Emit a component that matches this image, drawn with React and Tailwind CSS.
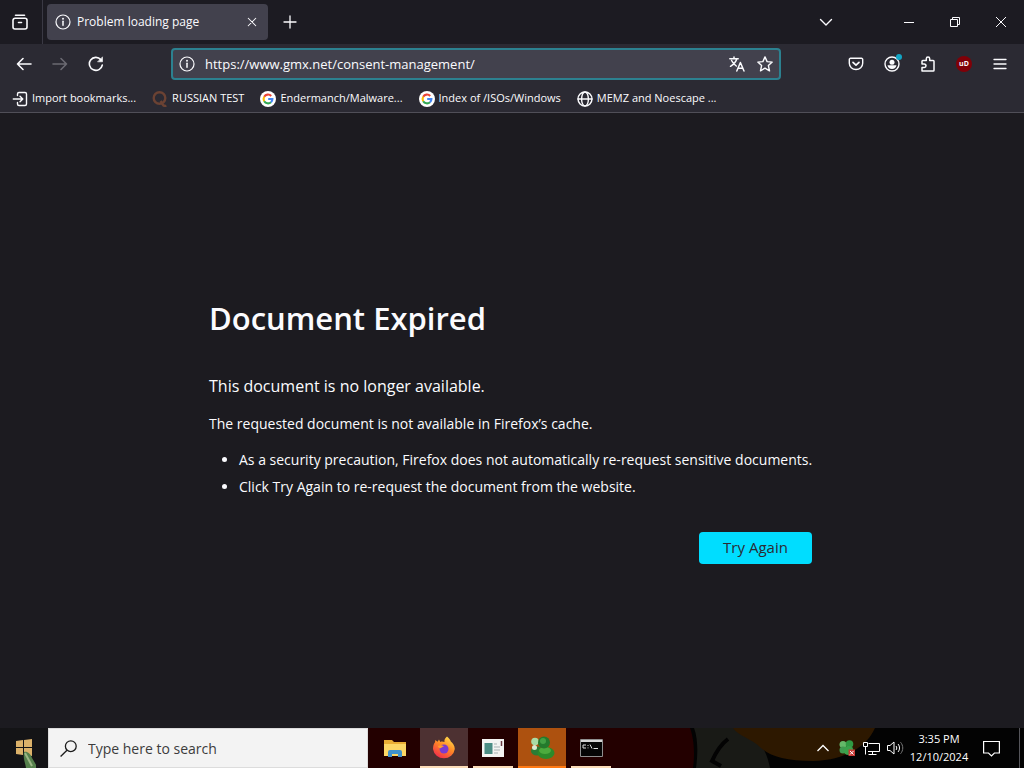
import { useState } from 'react';

const bookmarks = [
  { label: 'Import bookmarks...', icon: 'import' },
  { label: 'RUSSIAN TEST', icon: 'quora' },
  { label: 'Endermanch/Malware...', icon: 'google' },
  { label: 'Index of /ISOs/Windows', icon: 'google' },
  { label: 'MEMZ and Noescape ...', icon: 'globe' },
];

function Stroke({ size = 16, width = 1.4, children }) {
  return (
    <svg
      width={size}
      height={size}
      viewBox="0 0 16 16"
      fill="none"
      stroke="currentColor"
      strokeWidth={width}
      strokeLinecap="round"
      strokeLinejoin="round"
      aria-hidden="true"
    >
      {children}
    </svg>
  );
}

function InfoIcon() {
  return (
    <Stroke width={1.2}>
      <circle cx="8" cy="8" r="7" />
      <path d="M8 7.3v4" strokeWidth="1.5" />
      <circle cx="8" cy="4.7" r="0.4" fill="currentColor" />
    </Stroke>
  );
}

function GoogleIcon() {
  return (
    <svg width="16" height="16" viewBox="0 0 16 16" fill="none" aria-hidden="true">
      <circle cx="8" cy="8" r="8" fill="#fff" />
      <g strokeWidth="2.1">
        <path d="M4.2 5.8A4.4 4.4 0 0 1 11.2 4.9" stroke="#ea4335" />
        <path d="M4.2 10.2A4.4 4.4 0 0 1 4.2 5.8" stroke="#fbbc05" />
        <path d="M11 11.2A4.4 4.4 0 0 1 4.2 10.2" stroke="#34a853" />
        <path d="M8.2 8h4.2A4.4 4.4 0 0 1 11 11.2" stroke="#4285f4" />
      </g>
    </svg>
  );
}

function BookmarkIcon({ name }) {
  if (name === 'google') return <GoogleIcon />;
  if (name === 'quora') {
    return (
      <svg width="16" height="16" viewBox="0 0 16 16" fill="none" stroke="#6b4233" aria-hidden="true">
        <circle cx="7.5" cy="7" r="5.8" strokeWidth="2.4" />
        <path d="M8.6 10l2.2 3.6c.8 1.3 2 1.6 3.6 1.2" strokeWidth="2.4" />
      </svg>
    );
  }
  if (name === 'globe') {
    return (
      <Stroke>
        <circle cx="8" cy="8" r="7" />
        <ellipse cx="8" cy="8" rx="3.4" ry="7" />
        <path d="M1 8h14" />
      </Stroke>
    );
  }
  return (
    <Stroke>
      <path d="M5.5 4.5V3A1.5 1.5 0 0 1 7 1.5h6A1.5 1.5 0 0 1 14.5 3v10a1.5 1.5 0 0 1-1.5 1.5H7A1.5 1.5 0 0 1 5.5 13v-1.5" />
      <path d="M1.3 8h9.4M8 5.2L10.8 8 8 10.8" />
    </Stroke>
  );
}

function ToolButton({ label, className = '', children }) {
  return (
    <button type="button" aria-label={label} className={`flex h-8 w-9 items-center justify-center ${className}`}>
      {children}
    </button>
  );
}

function TabStrip() {
  return (
    <div className="flex h-11 items-center bg-[#1c1b22]">
      <div className="flex h-full w-[43px] items-center border-r border-[#3a3944]">
        <ToolButton label="Firefox View" className="ml-0.5">
          <Stroke width={1.6}>
            <path d="M3.5 1.2h9" />
            <path d="M1 6.3a2 2 0 0 1 2-2h10a2 2 0 0 1 2 2V13a2 2 0 0 1-2 2H3a2 2 0 0 1-2-2zM6.5 8.5h3" />
          </Stroke>
        </ToolButton>
      </div>
      <div className="ml-1 flex h-9 w-[221px] items-center rounded bg-[#42414d] px-2">
        <InfoIcon />
        <span className="ml-1.5 flex-1 truncate text-xs">Problem loading page</span>
        <button type="button" aria-label="Close tab" className="flex h-4 w-4 items-center justify-center">
          <Stroke size={12}>
            <path d="M3 3l10 10M13 3L3 13" />
          </Stroke>
        </button>
      </div>
      <ToolButton label="Open a new tab" className="ml-1">
        <Stroke width={1.3}>
          <path d="M8 2v12M2 8h12" />
        </Stroke>
      </ToolButton>
      <div className="flex-1" />
      <ToolButton label="List all tabs" className="mr-[42px]">
        <Stroke>
          <path d="M2.5 5.5L8 11l5.5-5.5" />
        </Stroke>
      </ToolButton>
      <button type="button" aria-label="Minimize" className="flex h-8 w-[46px] items-center justify-center">
        <svg width="10" height="10" stroke="currentColor" aria-hidden="true"><path d="M0 5.5h10" /></svg>
      </button>
      <button type="button" aria-label="Restore" className="flex h-8 w-[46px] items-center justify-center">
        <svg width="10" height="10" fill="none" stroke="currentColor" aria-hidden="true">
          <path d="M.5 2.5h7v7h-7zM2.5 2.5v-2h7v7h-2" />
        </svg>
      </button>
      <button type="button" aria-label="Close" className="flex h-8 w-[46px] items-center justify-center">
        <svg width="10" height="10" stroke="currentColor" aria-hidden="true"><path d="M0 0l10 10M10 0L0 10" /></svg>
      </button>
    </div>
  );
}

function NavBar() {
  const [url, setUrl] = useState('https://www.gmx.net/consent-management/');

  return (
    <div className="flex h-10 items-center px-1.5">
      <ToolButton label="Back">
        <Stroke width={1.6}><path d="M15 8H1.5M7 2.5L1.5 8 7 13.5" /></Stroke>
      </ToolButton>
      <ToolButton label="Forward" className="text-[#6b6a72]">
        <Stroke width={1.6}><path d="M1 8h13.5M9 2.5L14.5 8 9 13.5" /></Stroke>
      </ToolButton>
      <ToolButton label="Reload">
        <Stroke width={1.6}>
          <path d="M14.3 9A6.5 6.5 0 1 1 12.8 3.6" />
          <path d="M14.5 1.2v4.6H9.9z" fill="currentColor" strokeWidth="0.6" />
        </Stroke>
      </ToolButton>
      <div className="mx-[57px] flex h-8 min-w-0 flex-1 items-center rounded border-2 border-[#2c8190] bg-[#42414d] px-1.5">
        <InfoIcon />
        <input
          type="text"
          aria-label="Address"
          value={url}
          onChange={(e) => setUrl(e.target.value)}
          className="ml-2.5 min-w-0 flex-1 bg-transparent pt-0.5 text-[13px] outline-none"
        />
        <button type="button" aria-label="Translate this page" className="mr-3">
          <Stroke width={1.5}>
            <path d="M.8 2.8h8.4M5 1v1.8M7.8 2.8C7 6 4.5 8.5 1.5 10.3M2.6 4.5C3.8 7 5.5 8.8 7.3 10" />
            <path d="M7.8 15l3.6-8.5L15 15M9 12.3h4.8" />
          </Stroke>
        </button>
        <button type="button" aria-label="Bookmark this page">
          <Stroke>
            <path d="M8 .9l2.1 4.7 5.1.5-3.8 3.5 1.1 5.2L8 12.2l-4.5 2.6 1.1-5.2L.8 6.1l5.1-.5z" />
          </Stroke>
        </button>
      </div>
      <ToolButton label="Save to Pocket">
        <Stroke>
          <path d="M2.5 2.3h11a1.2 1.2 0 0 1 1.2 1.2v3.8a6.7 6.2 0 0 1-13.4 0V3.5a1.2 1.2 0 0 1 1.2-1.2z" />
          <path d="M5 6.3l3 2.9 3-2.9" strokeWidth="1.7" />
        </Stroke>
      </ToolButton>
      <ToolButton label="Account" className="relative">
        <Stroke>
          <circle cx="8" cy="8" r="7" />
          <circle cx="8" cy="6.2" r="2.5" fill="currentColor" stroke="none" />
          <path d="M3.5 9.3h9c-.3 2.2-2 3.7-4.5 3.7s-4.2-1.5-4.5-3.7z" fill="currentColor" stroke="none" />
        </Stroke>
        <span className="absolute top-1.5 right-2 h-1.5 w-1.5 rounded-full bg-[#12a5c5]" />
      </ToolButton>
      <ToolButton label="Extensions">
        <Stroke width={1.5}>
          <path d="M2 15v-3.5h2.3a1.7 1.7 0 0 0 0-3.4H2V5.3A.8.8 0 0 1 2.8 4.5h3.5V2.8a1.7 1.7 0 0 1 3.4 0v1.7h3.5a.8.8 0 0 1 .8.8v8.9a.8.8 0 0 1-.8.8z" />
        </Stroke>
      </ToolButton>
      <ToolButton label="uBlock Origin">
        <span className="flex h-4 w-4 items-center justify-center rounded-full bg-[#800008] text-[7px] font-bold">uD</span>
      </ToolButton>
      <ToolButton label="Open application menu">
        <Stroke width={1.3}><path d="M2 3.5h12M2 8h12M2 12.5h12" /></Stroke>
      </ToolButton>
    </div>
  );
}

function FolderIcon() {
  return (
    <svg width="22" height="20" viewBox="0 0 22 20" aria-hidden="true">
      <path d="M0 2h8l2 2h12v14H0z" fill="#e9ae35" />
      <path d="M0 6h22v12H0z" fill="#fbd766" />
      <path d="M4 19v-5a2 2 0 0 1 2-2h10a2 2 0 0 1 2 2v5h-4v-3H8v3z" fill="#3f92cc" />
    </svg>
  );
}

function FirefoxIcon() {
  return (
    <svg width="24" height="24" viewBox="0 0 24 24" aria-hidden="true">
      <defs>
        <linearGradient id="fox" x1="0.8" y1="0" x2="0.2" y2="1">
          <stop offset="0" stopColor="#ffe14d" />
          <stop offset="0.45" stopColor="#ff8a26" />
          <stop offset="1" stopColor="#f0254f" />
        </linearGradient>
      </defs>
      <path d="M15 .5c2 1.5 3.3 3.3 3.8 5 1.8 1.2 4 4 4 7.5A11 10.8 0 0 1 1 13c0-3 .8-5.2 2-6.8L3.3 4l2.3 1.7L7 3.5l1.3 2.4c1.5-.5 3-.3 4.2.2C12 4 13.2 2 15 .5z" fill="url(#fox)" />
      <circle cx="12" cy="13" r="4.5" fill="#7a3bd0" />
      <path d="M6 10c2-1 4.5-.8 6 .5-2 .2-2 1.3-3.6 1.7C7.2 12.5 6.3 11.5 6 10z" fill="#ff9b2b" />
    </svg>
  );
}

function InstallerIcon() {
  return (
    <svg width="22" height="18" viewBox="0 0 22 18" aria-hidden="true">
      <path d="M0 0h22v18H0z" fill="#f4f4f2" />
      <path d="M2.5 4h8v11h-8z" fill="#4b8d84" />
      <path d="M12 5h3M12 8h6M12 11h6M12 14h4" stroke="#a9b3b3" />
      <path d="M19.5 2v5" stroke="#6a3c44" strokeWidth="1.5" />
    </svg>
  );
}

function BuddyIcon() {
  return (
    <svg width="26" height="24" viewBox="0 0 26 24" aria-hidden="true">
      <ellipse cx="8" cy="15" rx="6" ry="4.5" fill="#2b7d35" />
      <circle cx="6" cy="5.5" r="3.8" fill="#a9dba5" />
      <circle cx="5.5" cy="11.5" r="2.5" fill="#d9ead0" />
      <ellipse cx="17" cy="17" rx="8.5" ry="6" fill="#2c8a2a" />
      <ellipse cx="16" cy="14.5" rx="6" ry="3.5" fill="#4cab3d" />
      <circle cx="15" cy="6.5" r="6" fill="#237a2c" />
      <circle cx="14" cy="5" r="3" fill="#42a044" />
    </svg>
  );
}

function TerminalIcon() {
  return (
    <svg width="23" height="18" viewBox="0 0 23 18" aria-hidden="true">
      <path d="M.5.5h22v17H.5z" fill="#050505" stroke="#8f8f8f" />
      <path d="M1 2h21" stroke="#d5d5d5" strokeWidth="2" />
      <path d="M6 6H3v3h3M8 6v1M8 8.5v.8M10 5.5l2 4M13.5 9.5H18" stroke="#ddd" fill="none" />
    </svg>
  );
}

const apps = [
  { label: 'File Explorer', Icon: FolderIcon, tile: '', bar: '' },
  { label: 'Firefox', Icon: FirefoxIcon, tile: 'bg-[#4d3132]', bar: 'w-12 bg-[#fbdcb8]' },
  { label: 'Setup', Icon: InstallerIcon, tile: '', bar: 'w-10 bg-[#fbdcb8]' },
  { label: 'Messenger', Icon: BuddyIcon, tile: 'bg-[#ad510f]', bar: 'w-12 bg-[#ff7a14]' },
  { label: 'Command Prompt', Icon: TerminalIcon, tile: '', bar: 'w-10 bg-[#fbdcb8]' },
];

function TrayButton({ label, children }) {
  return (
    <button type="button" aria-label={label} className="flex h-10 w-6 items-center justify-center">
      {children}
    </button>
  );
}

function Taskbar() {
  return (
    <div className="relative flex h-10 bg-[#230000] text-white">
      {/* wallpaper showing through the bar */}
      <svg className="absolute top-0 right-0" width="334" height="40" viewBox="0 0 334 40" aria-hidden="true">
        <path d="M0 0h334v40H3C5 26 4 10 0 0z" fill="#030303" />
        <path d="M4 0h44c20 8 28 20 32 40H6C8 26 8 10 4 0z" fill="#191a16" />
        <path d="M43 0h142c-8 18-28 32-62 33-26 0-42-4-52-13C61 10 48 8 43 0z" fill="#2d1800" />
        <path d="M38 11c-8 6-12 13-16 22l9 5" fill="none" stroke="#030303" strokeWidth="4" />
      </svg>
      <button type="button" aria-label="Start" className="flex w-12 items-center justify-center bg-[#141416]">
        <svg width="24" height="40" viewBox="0 0 24 40" aria-hidden="true">
          <path d="M4 13l7-1v7H4zM12 12l8-1v8h-8zM4 20h7v7l-7-1zM12 20h8v8l-8-1z" fill="#dcb26a" />
          <path d="M12 24c3-1 7 2 8 6l6 10h-12c-1-6-3-10-2-16z" fill="#55804c" />
          <path d="M13 25l7 13" stroke="#9cb685" strokeWidth="2" />
        </svg>
      </button>
      <label className="flex w-80 min-w-0 items-center border border-[#dcdcdc] bg-[#f3f3f3] pl-[11px] text-[#1c1c1c]">
        <svg width="17" height="17" viewBox="0 0 17 17" fill="none" stroke="currentColor" strokeWidth="1.3" aria-hidden="true">
          <circle cx="10.8" cy="6.2" r="5.4" />
          <path d="M7 10.2L.6 16.5" />
        </svg>
        <input
          type="text"
          aria-label="Type here to search"
          placeholder="Type here to search"
          className="ml-[11px] min-w-0 flex-1 bg-transparent pt-0.5 text-sm outline-none placeholder:text-[#3c3c3c]"
        />
      </label>
      <div className="ml-[3px] flex gap-px">
        {apps.map(({ label, Icon, tile, bar }) => (
          <button
            key={label}
            type="button"
            aria-label={label}
            className={`relative flex w-12 items-center justify-center ${tile}`}
          >
            <Icon />
            {bar && <span className={`absolute bottom-0 h-0.5 ${bar}`} />}
          </button>
        ))}
      </div>
      <div className="relative ml-auto flex items-center">
        <TrayButton label="Show hidden icons">
          <svg width="12" height="8" fill="none" stroke="currentColor" strokeWidth="1.3" aria-hidden="true"><path d="M.5 7L6 1.5 11.5 7" /></svg>
        </TrayButton>
        <TrayButton label="Messenger status">
          <svg width="16" height="16" viewBox="0 0 16 16" aria-hidden="true">
            <circle cx="4" cy="4.5" r="3.5" fill="#64b868" />
            <circle cx="10.5" cy="4" r="3.8" fill="#2f9a43" />
            <circle cx="4" cy="10" r="3.5" fill="#3f9a50" />
            <ellipse cx="9.5" cy="10.5" rx="5" ry="4.5" fill="#3aa14b" />
            <path d="M9.5 9.5h6.500v6.500H9.500z" fill="#c93a36" />
            <path d="M11 11l3.5 3.5M14.5 11L11 14.5" stroke="#fff" />
          </svg>
        </TrayButton>
        <TrayButton label="Network">
          <svg width="17" height="15" viewBox="0 0 17 15" fill="none" stroke="currentColor" aria-hidden="true">
            <path d="M5.5 2.5h11v8H5M5.5 13.5h8M9.5 10.5v3M.5 1.5h4v4h-4zM2.5 5.5v8" />
          </svg>
        </TrayButton>
        <TrayButton label="Volume">
          <svg width="17" height="14" viewBox="0 0 17 14" fill="none" stroke="currentColor" aria-hidden="true">
            <path d="M.5 4.5H3l4-3.5v12L3 9.5H.5zM9 5c1 1.2 1 2.8 0 4M11 3c2 2.3 2 5.7 0 8" />
            <path d="M13.5 1.2c3 3.4 3 8.2 0 11.6" stroke="#777" />
          </svg>
        </TrayButton>
        <div className="w-16 text-center text-[11px] leading-[18px]">
          <div>3:35 PM</div>
          <div>12/10/2024</div>
        </div>
        <button type="button" aria-label="Notifications" className="flex h-10 w-10 items-center justify-center">
          <svg width="17" height="17" fill="none" stroke="currentColor" strokeWidth="1.2" aria-hidden="true">
            <path d="M.6 1.5h15.8V13h-5L8.500 16l-3-3H.6z" />
          </svg>
        </button>
        <button type="button" aria-label="Show desktop" className="ml-2 h-10 w-[5px] border-l border-[#55555a]" />
      </div>
    </div>
  );
}

export default function App() {
  return (
    <div className="flex min-h-screen flex-col bg-[#1c1b20] font-['Open_Sans','Noto_Sans',sans-serif] text-[#fbfbfe]">
      <header>
        <TabStrip />
        <div className="border-b border-[#504f58] bg-[#2b2a33]">
          <NavBar />
          <nav className="flex h-7 items-center gap-4 pt-px pl-3">
            {bookmarks.map(({ label, icon }) => (
              <a key={label} href="#" className="flex items-center gap-1 text-[11px] whitespace-nowrap">
                <BookmarkIcon name={icon} />
                {label}
              </a>
            ))}
          </nav>
        </div>
      </header>

      <main className="flex flex-1 flex-col justify-center px-4 pt-5">
        <div className="mx-auto w-full max-w-[606px]">
          <h1 className="text-[31px] leading-10 font-semibold">Document Expired</h1>
          <p className="mt-9 text-base leading-6">This document is no longer available.</p>
          <p className="mt-3.5 text-sm leading-6">The requested document is not available in Firefox’s cache.</p>
          <ul className="mt-2.5 list-disc pl-[30px] text-sm leading-[27px]">
            <li>As a security precaution, Firefox does not automatically re-request sensitive documents.</li>
            <li>Click Try Again to re-request the document from the website.</li>
          </ul>
          <div className="mt-8 flex justify-end pr-[3px]">
            <button type="button" className="h-8 w-[113px] rounded bg-[#00ddff] text-[15px] text-[#2b2a33]">
              Try Again
            </button>
          </div>
        </div>
      </main>

      <Taskbar />
    </div>
  );
}
